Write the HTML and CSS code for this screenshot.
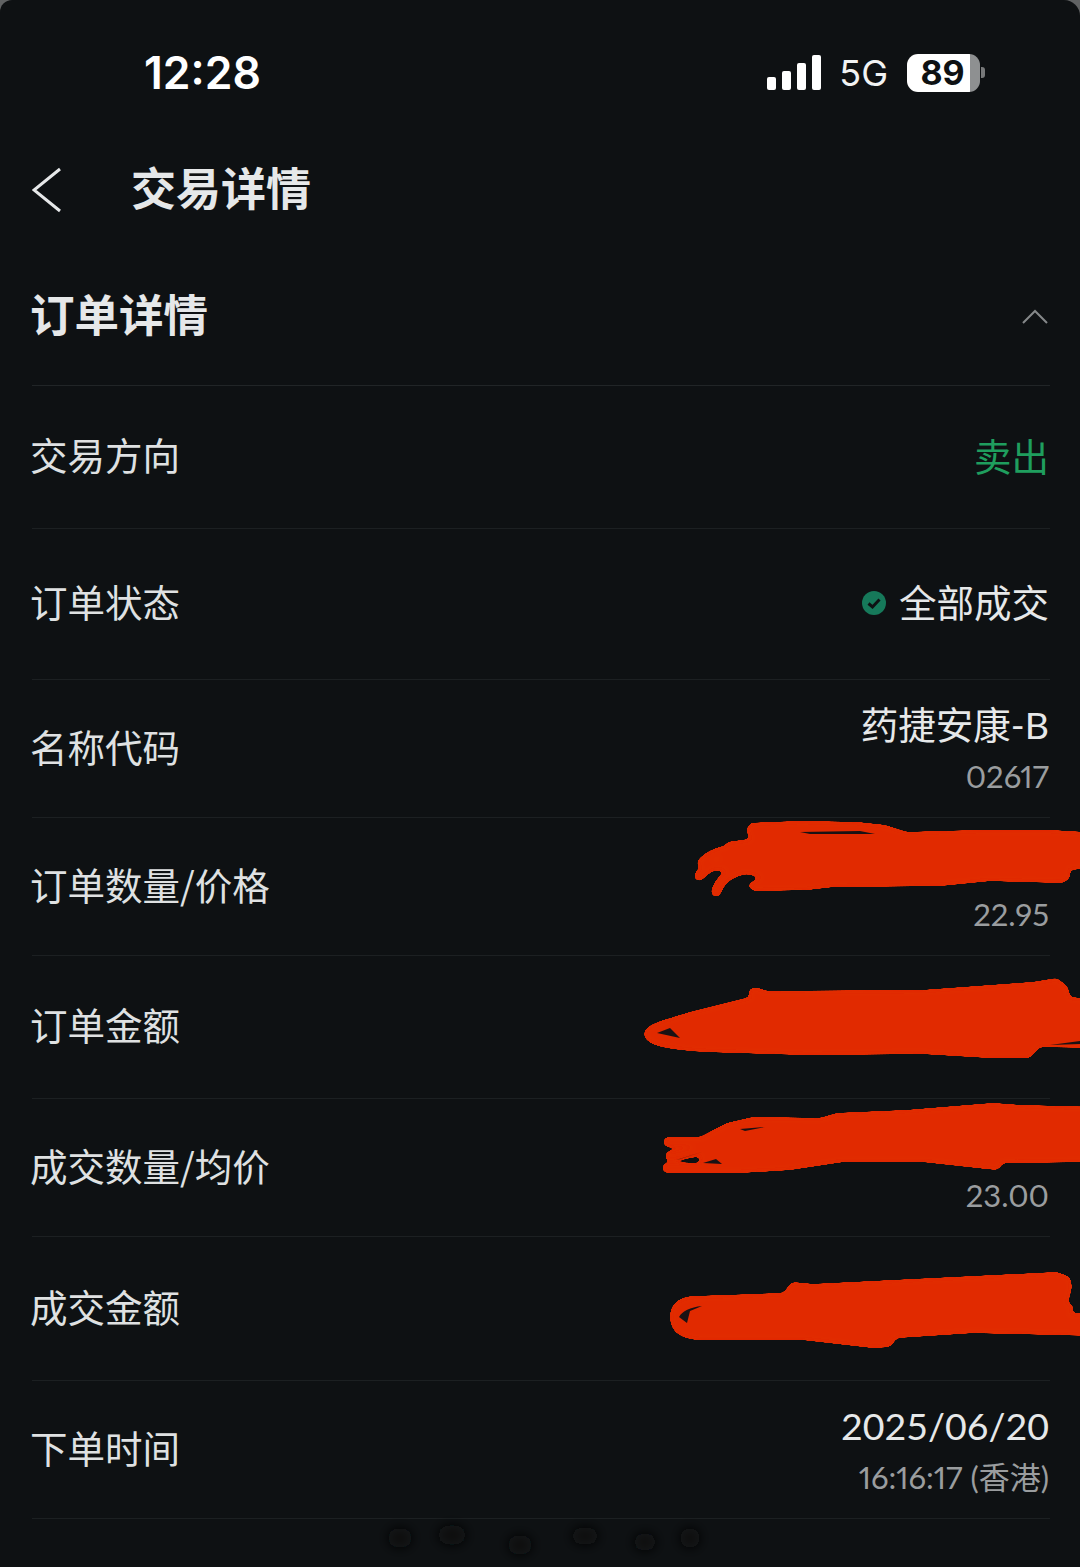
FILE: index.html
```html
<!DOCTYPE html>
<html lang="zh-CN">
<head>
  <meta charset="UTF-8">
  <link rel="stylesheet" href="styles.css">
</head>
<body>
  <div class="screen">
    <div class="status-bar">
      <span class="clock">12:28</span>
      <div class="status-icons">
        <div class="signal">
          <i class="bar bar-1"></i>
          <i class="bar bar-2"></i>
          <i class="bar bar-3"></i>
          <i class="bar bar-4"></i>
        </div>
        <span class="network">5G</span>
        <div class="battery"><span class="battery-level">89</span></div>
        <i class="battery-nub"></i>
      </div>
    </div>

    <div class="nav">
      <svg class="back" width="30" height="46" viewBox="0 0 30 46">
        <path d="M28 2 L2 23 L28 44" fill="none" stroke="#e6e8e9" stroke-width="3"/>
      </svg>
      <h1 class="nav-title">交易详情</h1>
    </div>

    <div class="section-head">
      <h2 class="section-title">订单详情</h2>
      <svg class="collapse" width="26" height="15" viewBox="0 0 26 15">
        <path d="M1 14 L13 2 L25 14" fill="none" stroke="#85888a" stroke-width="2"/>
      </svg>
    </div>

    <div class="row row-143">
      <span class="label">交易方向</span>
      <span class="value sell">卖出</span>
    </div>
    <div class="row row-151">
      <span class="label">订单状态</span>
      <div class="status-value">
        <svg width="24" height="24" viewBox="0 0 24 24">
          <circle cx="12" cy="12" r="12" fill="#16795a"/>
          <path d="M6.5 12.5 L10.5 16 L17.5 8.5" fill="none" stroke="#0e1113" stroke-width="3"/>
        </svg>
        <span class="value">全部成交</span>
      </div>
    </div>
    <div class="row row-138">
      <span class="label">名称代码</span>
      <div class="stack">
        <span class="value">药捷安康-B</span>
        <span class="sub">02617</span>
      </div>
    </div>
    <div class="row row-138">
      <span class="label">订单数量/价格</span>
      <div class="stack">
        <span class="value">&nbsp;</span>
        <span class="sub">22.95</span>
      </div>
    </div>
    <div class="row row-143">
      <span class="label">订单金额</span>
    </div>
    <div class="row row-138">
      <span class="label">成交数量/均价</span>
      <div class="stack">
        <span class="value">&nbsp;</span>
        <span class="sub">23.00</span>
      </div>
    </div>
    <div class="row row-144">
      <span class="label">成交金额</span>
    </div>
    <div class="row row-138">
      <span class="label">下单时间</span>
      <div class="stack">
        <span class="value">2025/06/20</span>
        <span class="sub">16:16:17 (香港)</span>
      </div>
    </div>

    <!-- 手绘涂抹遮挡 -->
    <svg class="scribbles" width="1080" height="1567" viewBox="0 0 1080 1567">
      <defs>
        <filter id="goo" filterUnits="userSpaceOnUse" x="600" y="780" width="560" height="620">
          <feGaussianBlur stdDeviation="2.5"/>
          <feColorMatrix values="1 0 0 0 0  0 1 0 0 0  0 0 1 0 0  0 0 0 30 -14"/>
        </filter>
        <filter id="smudge" filterUnits="userSpaceOnUse" x="340" y="1490" width="400" height="77">
          <feGaussianBlur stdDeviation="6"/>
        </filter>
      </defs>
      <g class="ink" filter="url(#goo)">
        <path d="M750 823 L800 821 L857 822 L885 825 L907 832 L980 830 L1050 830 L1100 833 L1100 867 L1070 870 L1070 878 L1063 883 L990 881 L940 886 L833 887 L807 890 L753 891 L747 885 L760 877 L737 872 L713 870 L727 842 L750 839 L746 830 Z"/>
        <path class="stroke" d="M742 870 Q722 874 716 892"/>
        <path class="stroke" d="M745 862 Q712 860 699 876"/>
        <path class="stroke" d="M745 850 Q716 848 702 863"/>

        <path d="M644 1034 C644 1024 665 1020 690 1012 L750 997 L748 990 L755 987 L767 991 L923 990 L1033 982 L1057 978 L1068 987 L1070 997 L1100 1000 L1100 1048 L1040 1047 L1030 1058 L990 1058 L923 1054 L807 1055 L707 1052 C670 1050 644 1046 644 1034 Z"/>

        <path d="M700 1137 L727 1123 L753 1117 L820 1118 L837 1113 L907 1110 L993 1103 L1020 1105 L1100 1107 L1100 1162 L1003 1163 L998 1170 L987 1169 L923 1162 L843 1162 L790 1170 L740 1173 L700 1173 Z"/>
        <path class="stroke" d="M668 1142 L720 1142"/>
        <path class="stroke" d="M670 1156 L720 1148"/>
        <path class="stroke" d="M667 1168 L720 1168"/>

        <path d="M670 1317 Q670 1296 697 1296 L783 1293 L792 1282 L813 1284 L1057 1272 L1070 1277 L1072 1287 L1068 1303 L1075 1307 L1070 1313 L1100 1314 L1100 1336 L973 1333 L897 1338 L890 1347 L873 1348 L803 1340 L703 1340 Q670 1340 670 1317 Z"/>
      </g>
      <path class="gap" d="M800 832 L860 831 L875 834 L810 834 Z"/>
      <path class="gap" d="M657 1033 L670 1028 L680 1038 Z"/>
      <path class="gap" d="M1050 1045 L1080 1041 L1080 1044 Z"/>
      <path class="gap" d="M676 1160 L702 1152 L680 1159 Z"/>
      <path class="gap" d="M703 1163 L716 1159 L722 1164 Z"/>
      <path class="gap" d="M740 1129 L765 1127 L745 1131 Z"/>
      <path class="gap" d="M679 1317 Q684 1308 702 1306 L690 1311 L687 1323 Z"/>
      <g class="smudge" filter="url(#smudge)">
        <ellipse cx="400" cy="1538" rx="12" ry="10"/>
        <ellipse cx="452" cy="1535" rx="14" ry="10"/>
        <ellipse cx="520" cy="1545" rx="12" ry="10"/>
        <ellipse cx="585" cy="1536" rx="13" ry="9"/>
        <ellipse cx="645" cy="1542" rx="11" ry="9"/>
        <ellipse cx="690" cy="1538" rx="10" ry="10"/>
      </g>
    </svg>
  </div>
</body>
</html>
```

FILE: styles.css
```css
html {
  background-color: #606263;
}

body {
  margin: 0;
  font-family: "Noto Sans CJK SC", "Noto Sans", sans-serif;
  color: #e6e8e9;
}

.screen {
  position: relative;
  width: 1080px;
  height: 1567px;
  overflow: hidden;
  background-color: #0e1113;
  border-radius: 12px 16px 0 0;
}

.status-bar {
  display: flex;
  align-items: center;
  justify-content: space-between;
  height: 145px;
  padding: 0 95px 0 144px;
  box-sizing: border-box;
}

.clock {
  font-family: Inter, sans-serif;
  font-size: 44.5px;
  font-weight: 600;
  color: #fff;
}

.status-icons {
  display: flex;
  align-items: center;
}

.signal {
  display: flex;
  align-items: flex-end;
  gap: 6px;
  height: 35px;
  margin-right: 18px;
}

.bar {
  width: 9px;
  background-color: #fff;
  border-radius: 2px;
}

.bar-1 { height: 13px; }
.bar-2 { height: 19px; }
.bar-3 { height: 27px; }
.bar-4 { height: 35px; }

.network {
  font-family: Inter, sans-serif;
  font-size: 36px;
  color: #f2f3f3;
  margin-right: 19px;
}

.battery {
  width: 73px;
  height: 38px;
  border-radius: 11px;
  background: linear-gradient(to right, #fff 63px, #8e9091 63px);
}

.battery-level {
  display: block;
  width: 71px;
  font-family: Inter, sans-serif;
  font-size: 34px;
  font-weight: 700;
  line-height: 38px;
  text-align: center;
  color: #0e1113;
}

.battery-nub {
  width: 4px;
  height: 11px;
  margin-left: 1px;
  background-color: #77797a;
  border-radius: 0 3px 3px 0;
}

.nav {
  display: flex;
  align-items: center;
  height: 89px;
  padding-left: 32px;
}

.nav-title {
  margin: -6px 0 0 69px;
  font-size: 45px;
  font-weight: 700;
  color: #e6e8e9;
}

.section-head {
  display: flex;
  align-items: center;
  justify-content: space-between;
  height: 152px;
  margin: 0 30px 0 32px;
  padding-top: 6px;
  border-bottom: 1px solid #212527;
  box-sizing: border-box;
}

.section-title {
  margin: 0 0 0 -2px;
  font-size: 44.5px;
  font-weight: 700;
  color: #e6e8e9;
}

.collapse {
  margin: 8px 2px 0 0;
}

.row {
  display: flex;
  align-items: center;
  justify-content: space-between;
  margin: 0 30px 0 32px;
  padding-right: 1px;
  border-bottom: 1px solid #1c2022;
  box-sizing: border-box;
}

.row-138 { height: 138px; }
.row-143 { height: 143px; }
.row-144 { height: 144px; }
.row-151 { height: 151px; }

.label {
  margin: 0 0 7px -2px;
  font-size: 37.5px;
  color: #dfe1e2;
}

.value {
  font-family: Lato, "Noto Sans CJK SC", sans-serif;
  font-size: 37.5px;
  color: #e6e8e9;
  line-height: 50px;
}

.sell {
  margin-bottom: 1px;
  color: #1f9e5e;
}

.status-value {
  display: flex;
  align-items: center;
  gap: 13px;
  margin-bottom: 3px;
}

.stack {
  display: flex;
  flex-direction: column;
  align-items: flex-end;
  margin-top: 4px;
}

.sub {
  font-family: Lato, "Noto Sans CJK SC", sans-serif;
  font-size: 31px;
  font-variant-numeric: proportional-nums;
  color: #9a9d9f;
  line-height: 52px;
}

.scribbles {
  position: absolute;
  top: 0;
  left: 0;
}

.ink {
  fill: #e12c04;
}

.stroke {
  fill: none;
  stroke: #e12c04;
  stroke-width: 10;
  stroke-linecap: round;
}

.gap {
  fill: #1a1214;
}

.smudge {
  fill: #0a0c0d;
}
```
